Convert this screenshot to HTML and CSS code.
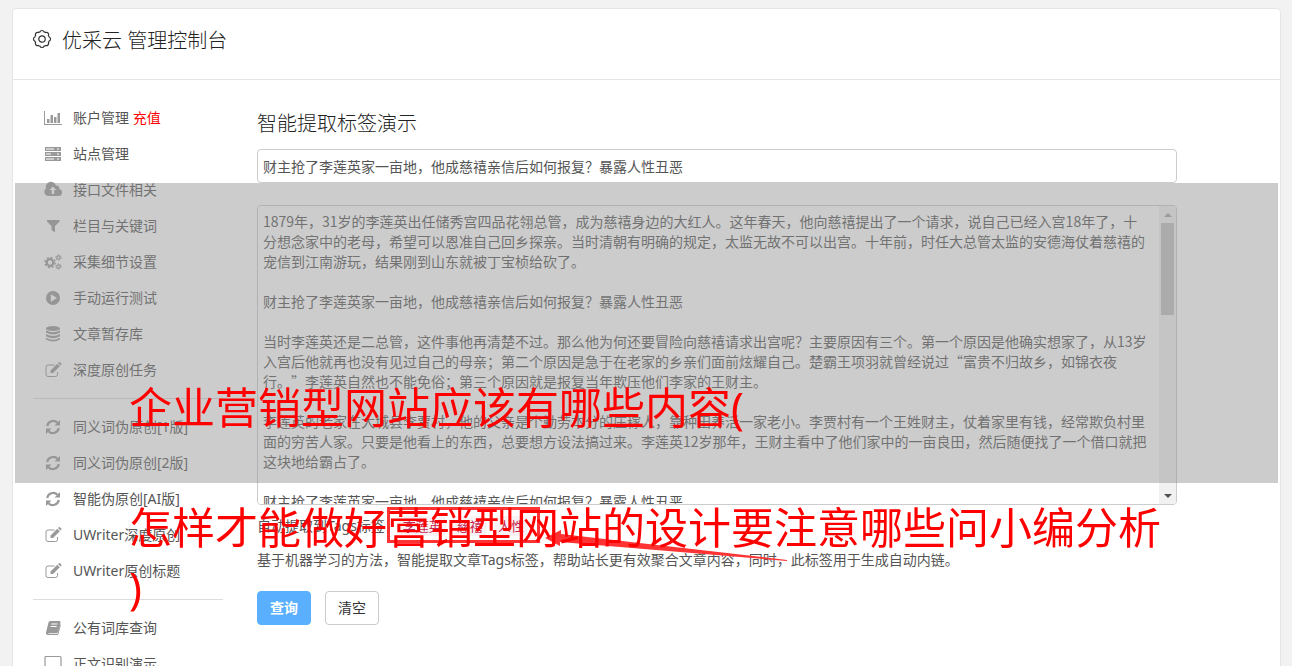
FILE: index.html
```
<!DOCTYPE html>
<html lang="zh-CN">
<head>
    <meta charset="UTF-8">
    <meta name="viewport" content="width=device-width, initial-scale=1.0">
    <title>优采云 管理控制台</title>
    <link rel="stylesheet" href="styles.css">
</head>
<body>

<!-- Иконки -->
<svg class="sprite" aria-hidden="true">
    <symbol id="i-edit" viewBox="0 0 18 18">
        <path d="M13.500 11v2.500a2 2 0 0 1-2 2H4a2 2 0 0 1-2-2V6a2 2 0 0 1 2-2h6.500" fill="none" stroke="currentColor" stroke-width="1"/>
        <path d="M6.500 9.500l6.800-6.800 2.500 2.500L9 12H6.500zM14 2l.8-.8a.8.8 0 0 1 1.100 0l1.400 1.400a.8.8 0 0 1 0 1.100l-.8.8z"/>
    </symbol>
    <symbol id="i-refresh" viewBox="0 0 18 18">
        <path d="M3.200 8a6 6 0 0 1 10.300-3.200M14.800 10a6 6 0 0 1-10.300 3.200" fill="none" stroke="currentColor" stroke-width="2.200"/>
        <path d="M16 2v5.500h-5.500zM2 16v-5.500h5.500z"/>
    </symbol>
</svg>

<div class="panel">
    <header class="panel-head">
        <svg class="head-icon" viewBox="0 0 20 20" fill="none" stroke="currentColor">
            <circle cx="10" cy="10" r="3.200" stroke-width="1.200"/>
            <path stroke-width="1.200" d="M8 2.800Q8.400 1.500 10 1.500T12 2.800Q12.800 3 13.700 3.600Q14.900 2.900 16 4T16.400 6.300Q17 7.200 17.200 8Q18.500 8.400 18.500 10T17.200 12Q17 12.800 16.400 13.700Q17.100 14.900 16 16T13.700 16.400Q12.800 17 12 17.200Q11.600 18.500 10 18.500T8 17.200Q7.200 17 6.300 16.400Q5.100 17.100 4 16T3.600 13.700Q3 12.800 2.800 12Q1.500 11.600 1.500 10T2.800 8Q3 7.200 3.600 6.300Q2.900 5.100 4 4T6.300 3.600Q7.200 3 8 2.800Z"/>
        </svg>
        <h1>优采云 管理控制台</h1>
    </header>

    <div class="panel-body">
        <nav class="sidebar">
            <a href="#"><svg class="icon" viewBox="0 0 18 18"><path d="M0 2h1v13h17v1H0zM3 10h2.500v4H3zM6.500 6H9v8H6.500zM10 8h2.500v6H10zM13.500 4H16v10h-2.500z"/></svg>账户管理 <span class="pay">充值</span></a>
            <a href="#"><svg class="icon" viewBox="0 0 18 18"><path fill-rule="evenodd" d="M1 2h16v4H1zM2 3.500v1h8v-1zM13 3.500v1h2v-1zM1 7h16v4H1zM2 8.500v1h5v-1zM13 8.500v1h2v-1zM1 12h16v4H1zM2 13.500v1h8v-1zM13 13.500v1h2v-1z"/></svg>站点管理</a>
            <a href="#"><svg class="icon" viewBox="0 0 18 18"><path fill-rule="evenodd" d="M5 15a4.200 4.200 0 0 1-3-7.500A5.200 5.200 0 0 1 12 4.500 3.400 3.400 0 0 1 15.500 8.300 3.400 3.400 0 0 1 14.500 15zM8.800 5.500L5.500 9h2.200v4h2.500V9h2.200z"/></svg>接口文件相关</a>
            <a href="#"><svg class="icon" viewBox="0 0 18 18"><path d="M3 3h12.500v1.500L11 9v6.500L7.500 13V9L3 4.500z"/></svg>栏目与关键词</a>
            <a href="#"><svg class="icon" viewBox="0 0 18 18" fill="none" stroke="currentColor">
                <circle cx="6" cy="9.500" r="3.300" stroke-width="2.200"/>
                <circle cx="6" cy="9.500" r="5" stroke-width="1.500" stroke-dasharray="2 1.930"/>
                <circle cx="14.500" cy="4.500" r="1.700" stroke-width="1.200"/>
                <circle cx="14.500" cy="4.500" r="2.700" stroke-dasharray="1.400 1.430"/>
                <circle cx="14.500" cy="13.500" r="1.700" stroke-width="1.200"/>
                <circle cx="14.500" cy="13.500" r="2.700" stroke-dasharray="1.400 1.430"/>
            </svg>采集细节设置</a>
            <a href="#"><svg class="icon" viewBox="0 0 18 18"><path fill-rule="evenodd" d="M9 2a7 7 0 1 1 0 14A7 7 0 0 1 9 2zM6.800 5.300v7.400L13 9z"/></svg>手动运行测试</a>
            <a href="#"><svg class="icon" viewBox="0 0 18 18"><ellipse cx="9" cy="3.500" rx="7" ry="2.500"/><path d="M2 5.200q7 4 14 0v2.300q-7 4-14 0zM2 9q7 4 14 0v2.300q-7 4-14 0zM2 12.700q7 4 14 0v1.800q-7 4-14 0z"/></svg>文章暂存库</a>
            <a href="#"><svg class="icon"><use href="#i-edit"/></svg>深度原创任务</a>
            <hr>
            <a href="#"><svg class="icon"><use href="#i-refresh"/></svg>同义词伪原创[1版]</a>
            <a href="#"><svg class="icon"><use href="#i-refresh"/></svg>同义词伪原创[2版]</a>
            <a href="#"><svg class="icon"><use href="#i-refresh"/></svg>智能伪原创[AI版]</a>
            <a href="#"><svg class="icon"><use href="#i-edit"/></svg>UWriter深度原创</a>
            <a href="#"><svg class="icon"><use href="#i-edit"/></svg>UWriter原创标题</a>
            <hr>
            <a href="#"><svg class="icon" viewBox="0 0 18 18"><path fill-rule="evenodd" d="M6 2h9.500q1.300 0 1 1.200L14 13q-.3 1-1.300 1H4.500v.8h9.200L16.200 5q.8.5.5 1.500L14.500 15q-.3 1-1.300 1H3.500Q1.500 15.800 2 13.500L4.500 3.500Q4.900 2 6 2zM7.500 4.500l-.3 1h6l.3-1zM6.800 7l-.3 1h6l.3-1z"/></svg>公有词库查询</a>
            <a href="#"><svg class="icon" viewBox="0 0 18 18" fill="none" stroke="currentColor"><rect x="1" y="1.500" width="16" height="12" rx="1" stroke-width="1.200"/><path d="M6 16h6M9 13v3" stroke-width="1.500"/></svg>正文识别演示</a>
        </nav>

        <main class="content">
            <h2>智能提取标签演示</h2>
            <input class="field" type="text" aria-label="标题" value="财主抢了李莲英家一亩地，他成慈禧亲信后如何报复？暴露人性丑恶">
            <div class="article-box">
                <textarea class="field article" aria-label="正文">1879年，31岁的李莲英出任储秀宫四品花翎总管，成为慈禧身边的大红人。这年春天，他向慈禧提出了一个请求，说自己已经入宫18年了，十分想念家中的老母，希望可以恩准自己回乡探亲。当时清朝有明确的规定，太监无故不可以出宫。十年前，时任大总管太监的安德海仗着慈禧的宠信到江南游玩，结果刚到山东就被丁宝桢给砍了。

财主抢了李莲英家一亩地，他成慈禧亲信后如何报复？暴露人性丑恶

当时李莲英还是二总管，这件事他再清楚不过。那么他为何还要冒险向慈禧请求出宫呢？主要原因有三个。第一个原因是他确实想家了，从13岁入宫后他就再也没有见过自己的母亲；第二个原因是急于在老家的乡亲们面前炫耀自己。楚霸王项羽就曾经说过“富贵不归故乡，如锦衣夜行。”李莲英自然也不能免俗；第三个原因就是报复当年欺压他们李家的王财主。

李莲英的老家在大城县李贾村，他的父亲是个勤劳本分的庄稼人，靠种田养活一家老小。李贾村有一个王姓财主，仗着家里有钱，经常欺负村里面的穷苦人家。只要是他看上的东西，总要想方设法搞过来。李莲英12岁那年，王财主看中了他们家中的一亩良田，然后随便找了一个借口就把这块地给霸占了。

财主抢了李莲英家一亩地，他成慈禧亲信后如何报复？暴露人性丑恶</textarea>
                <div class="scroll" aria-hidden="true">
                    <svg class="scroll-arrow up" viewBox="0 0 17 17"><path d="M5 11l4-4 4 4z"/></svg>
                    <div class="scroll-thumb"></div>
                    <svg class="scroll-arrow down" viewBox="0 0 17 17"><path d="M5 7l4 4 4-4z"/></svg>
                </div>
            </div>
            <p class="tags">自动提取到Tags标签：<span class="marked"><code>李莲英</code><code>慈禧</code><code>人性</code><svg class="arrow" viewBox="0 0 250 42"><path d="M5 16L21 8v4L247 38v1L20 20v4z"/></svg></span></p>
            <p class="note">基于机器学习的方法，智能提取文章Tags标签，帮助站长更有效聚合文章内容，同时，此标签用于生成自动内链。</p>
            <div class="buttons">
                <button class="btn btn-primary" type="button">查询</button>
                <button class="btn" type="button">清空</button>
            </div>
        </main>
    </div>
</div>

<div class="shade"></div>
<div class="caption">企业营销型网站应该有哪些内容(<br><br>怎样才能做好营销型网站的设计要注意哪些问小编分析<br>)</div>

</body>
</html>
```
FILE: styles.css
```
*,
*::before {
    box-sizing: border-box;
}

body {
    margin: 0;
    padding: 8px 11px 0 12px;
    height: 100vh;
    overflow: hidden;
    background: #f2f2f2;
    color: #555;
    font-family: "Noto Sans", "Noto Sans CJK SC", sans-serif;
    font-size: 14px;
    line-height: 20px;
}

.sprite {
    display: none;
}

.panel {
    background: #fff;
    border: 1px solid #e5e5e5;
    border-radius: 4px;
}

.panel-head {
    display: flex;
    align-items: center;
    gap: 10px;
    height: 71px;
    padding: 0 20px 10px 19px;
    border-bottom: 1px solid #e5e5e5;
    color: #333;
}

.head-icon {
    width: 20px;
    height: 20px;
}

h1,
h2 {
    margin: 0;
    font-size: 20px;
    font-weight: 300;
    line-height: 26px;
    color: #222;
}

.panel-head h1 {
    padding-top: 3px;
}

.panel-body {
    display: flex;
    gap: 34px;
    padding: 20px 103px 20px 20px;
}

/* Боковое меню */
.sidebar {
    flex: 0 0 190px;
}

.sidebar a {
    display: flex;
    align-items: center;
    height: 36px;
    padding-left: 11px;
    color: #555;
    text-decoration: none;
    white-space: pre;
}

.sidebar hr {
    margin: 10px 0;
    border: 0;
    border-top: 1px solid #ddd;
}

.icon {
    width: 18px;
    height: 18px;
    margin-right: 11px;
    color: #999;
    fill: currentColor;
}

.icon[fill="none"] {
    fill: none;
}

.sidebar .pay {
    color: #f00;
}

/* Основная часть */
.content {
    flex: 1;
    min-width: 0;
}

.content h2 {
    margin: 11px 0 12px;
}

.field {
    display: block;
    width: 100%;
    height: 34px;
    padding: 5px;
    border: 1px solid #ccc;
    border-radius: 4px;
    background: #fff;
    color: #555;
    font: inherit;
}

.article-box {
    position: relative;
    margin-top: 22px;
}

.article {
    height: 300px;
    padding-right: 26px;
    font-family: "Noto Sans CJK SC", sans-serif;
    text-spacing-trim: space-all;
    resize: none;
    scrollbar-width: none;
}

/* Полоса прокрутки */
.scroll {
    position: absolute;
    top: 1px;
    right: 1px;
    bottom: 1px;
    display: flex;
    flex-direction: column;
    width: 17px;
    border-radius: 0 3px 3px 0;
    background: #f1f1f1;
}

.scroll-thumb {
    height: 92px;
    margin: 0 2px;
    background: #c1c1c1;
}

.scroll-arrow {
    width: 17px;
    height: 17px;
    fill: #a3a3a3;
}

.scroll-arrow.down {
    margin-top: auto;
    fill: #505050;
}

.tags {
    margin: 11px 0 14px;
}

code {
    padding: 0 4px;
    border-radius: 4px;
    background: #f9f2f4;
    color: #c7254e;
    font-family: inherit;
    font-size: 13px;
}

/* Рамка со стрелкой вокруг тегов */
.marked {
    position: relative;
    display: inline-flex;
    gap: 7px;
}

.marked::before {
    content: "";
    position: absolute;
    left: -12px;
    top: -9px;
    width: 153px;
    height: 36px;
    border: 3px solid #f33;
}

.arrow {
    position: absolute;
    left: 141px;
    top: 6px;
    width: 250px;
    height: 42px;
    fill: #f33;
}

.note {
    margin: 0 0 21px;
}

.buttons {
    display: flex;
    gap: 14px;
}

.btn {
    height: 34px;
    padding: 0 12px;
    border: 1px solid #ccc;
    border-radius: 4px;
    background: #fff;
    color: #333;
    font: inherit;
}

.btn-primary {
    border-color: #5aafff;
    background: #5aafff;
    color: #fff;
    font-weight: 700;
}

/* Серая полоса и красная надпись поверх страницы */
.shade {
    position: absolute;
    left: 15px;
    right: 14px;
    top: 183px;
    height: 300px;
    background: rgba(146, 146, 146, 0.47);
}

.caption {
    position: absolute;
    left: 129px;
    top: 378px;
    color: #f00;
    font-size: 43px;
    line-height: 60px;
    white-space: nowrap;
}
```
